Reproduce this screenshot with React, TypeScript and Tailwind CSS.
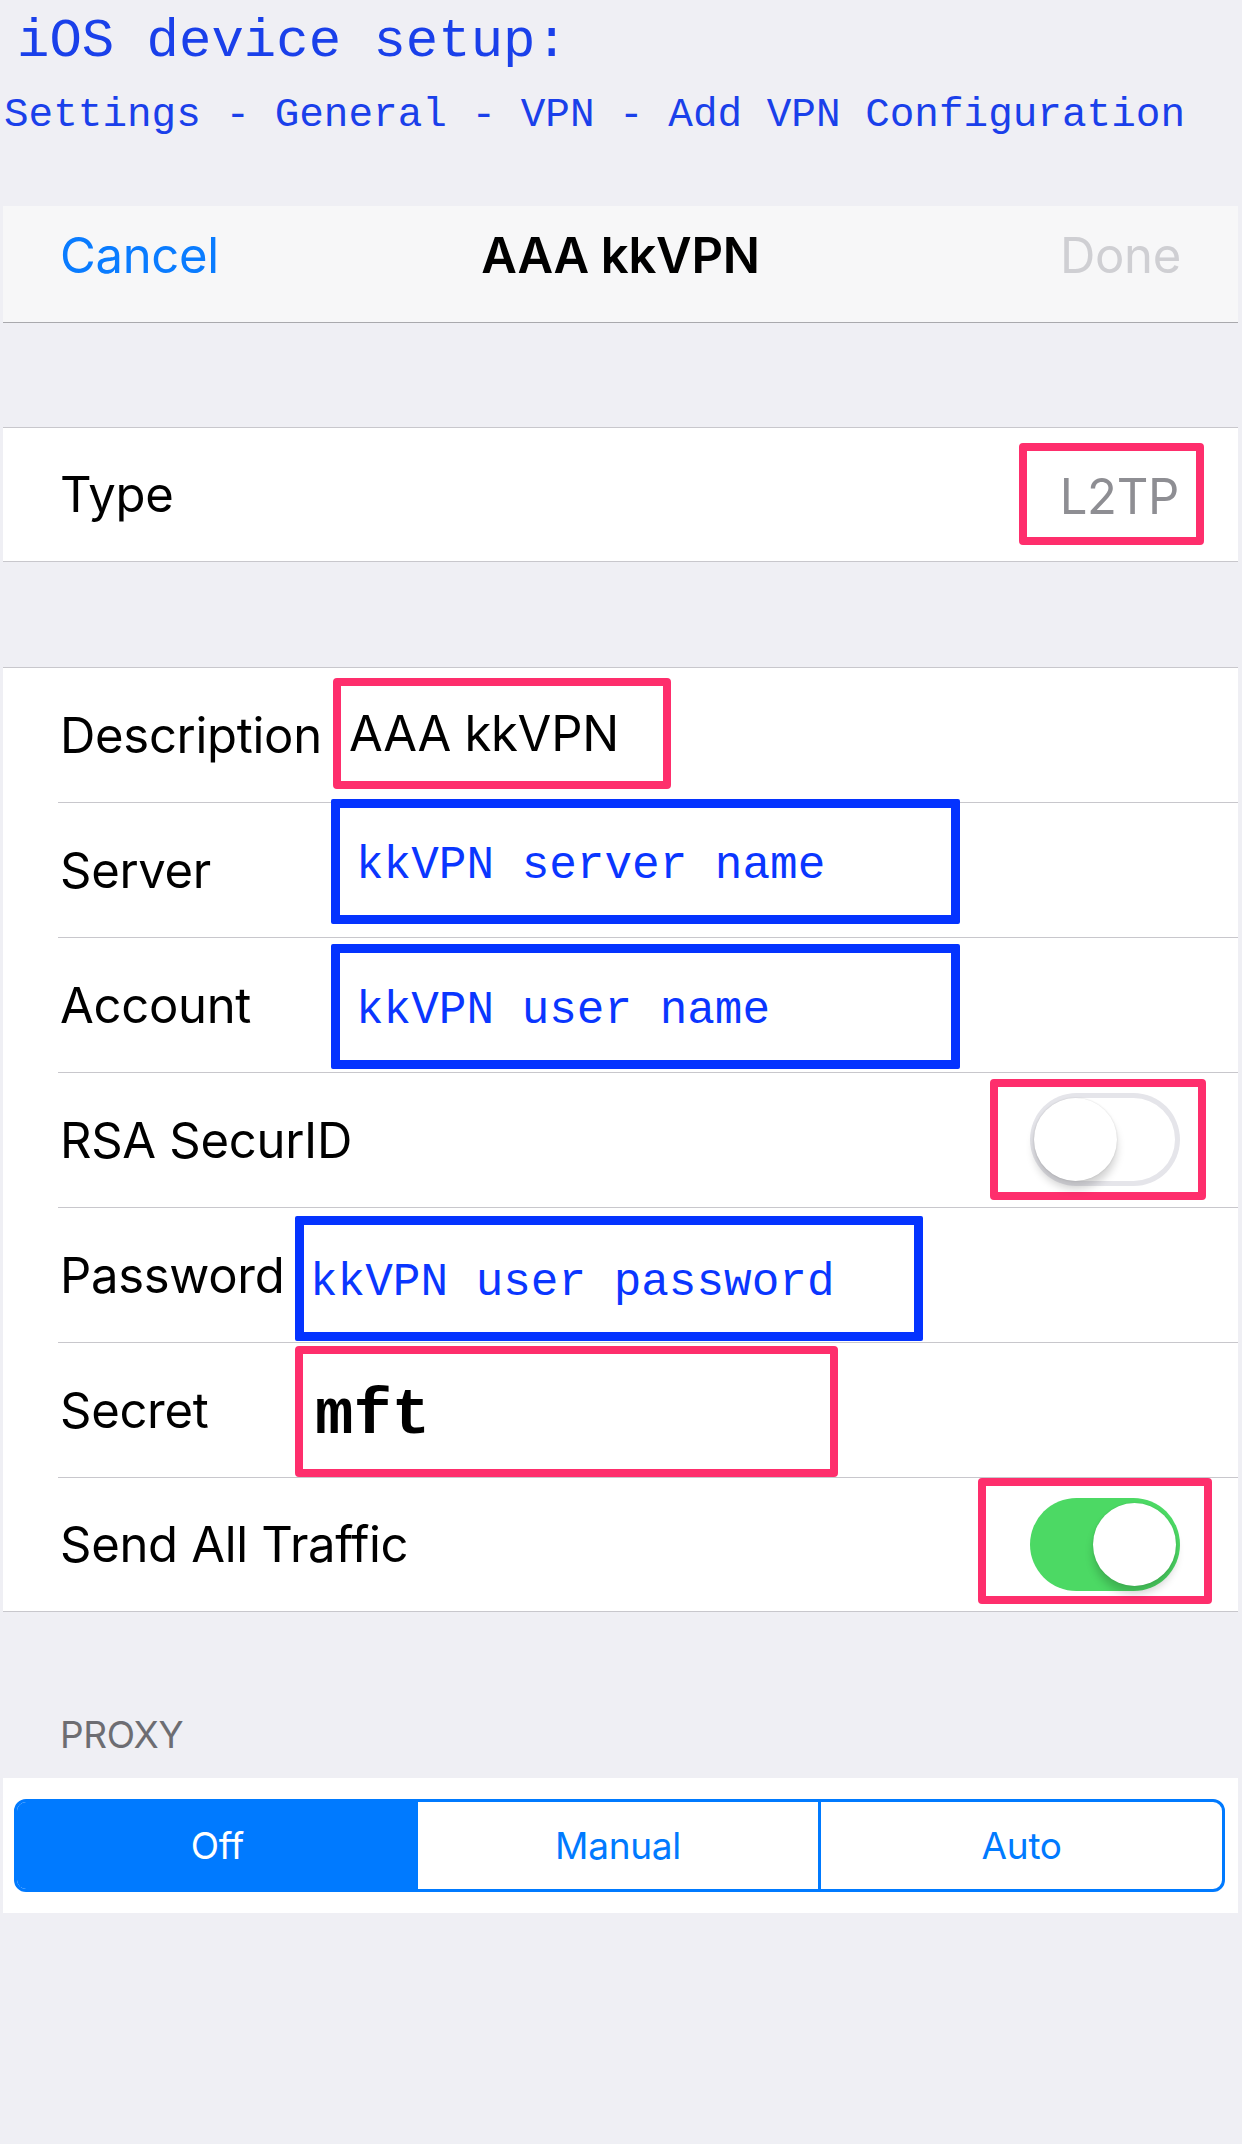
import React from "react";

// iOS "Add VPN Configuration" screen with annotation boxes drawn on top

const sans = "font-['Inter','Liberation_Sans',sans-serif] tracking-[-0.3px]";
const mono = "font-['Liberation_Mono','Courier_New',monospace] tracking-normal";

function Toggle({ on }: { on: boolean }) {
  return (
    <div
      className={
        on
          ? "relative w-[150px] h-[93px] rounded-full bg-[#4cd964]"
          : "relative w-[150px] h-[93px] rounded-full bg-white shadow-[inset_0_0_0_5px_#e5e5ea]"
      }
    >
      <div
        className={
          on
            ? "absolute left-[63px] top-[5px] w-[83px] h-[83px] rounded-full bg-white shadow-[0_8px_9px_rgba(0,0,0,0.18),0_0_2px_rgba(0,0,0,0.12)]"
            : "absolute left-[4px] top-[5px] w-[83px] h-[83px] rounded-full bg-white shadow-[0_8px_9px_rgba(0,0,0,0.18),0_0_2px_rgba(0,0,0,0.15)]"
        }
      />
    </div>
  );
}

function Row({
  children,
  last = false,
  h = "h-[134px]",
}: {
  children: React.ReactNode;
  last?: boolean;
  h?: string;
}) {
  return (
    <div>
      <div className={`flex items-start pl-[57px] ${h}`}>{children}</div>
      {!last && <div className="ml-[55px] h-px bg-[#c8c7cc]" />}
    </div>
  );
}

function Label({ text, w }: { text: string; w: string }) {
  return (
    <div className={`${w} self-center shrink-0 text-[49px] leading-none text-black ${sans}`}>
      {text}
    </div>
  );
}

function BlueBox({ text, w, mt, pl }: { text: string; w: string; mt: string; pl: string }) {
  return (
    <div
      className={`${w} ${mt} ${pl} h-[125px] shrink-0 flex items-center pt-[9px] border-[9px] border-[#0433ff] rounded-[2px] text-[46px] leading-none text-[#0a36ff] whitespace-pre ${mono}`}
    >
      {text}
    </div>
  );
}

export default function App() {
  return (
    <div className={`w-[1242px] min-h-[2144px] bg-[#efeff4] overflow-hidden ${sans}`}>
      {/* annotation header */}
      <div className="pt-[15px]">
        <div className={`pl-[17px] text-[54px] leading-none text-[#1a40ea] whitespace-pre ${mono}`}>
          iOS device setup:
        </div>
        <div className={`mt-[26px] pl-[4px] text-[41px] leading-none text-[#1a40ea] whitespace-pre ${mono}`}>
          Settings - General - VPN - Add VPN Configuration
        </div>
      </div>

      {/* nav bar */}
      <div className="mt-[70px] ml-[3px] w-[1235px] h-[117px] bg-[#f7f7f8] border-b border-[#a9a9ad] grid grid-cols-3 items-start pt-[25px] px-[57px] text-[49px] leading-none">
        <span className="justify-self-start text-[#0a7cff]">Cancel</span>
        <span className="justify-self-center font-semibold text-black whitespace-nowrap">AAA kkVPN</span>
        <span className="justify-self-end text-[#cfcfd3]">Done</span>
      </div>

      <div className="h-[104px]" />

      {/* type */}
      <div className="ml-[3px] w-[1235px] bg-white border-y border-[#c8c7cc]">
        <div className="flex items-start h-[133px] pl-[57px] pr-[34px]">
          <Label text="Type" w="w-auto" />
          <div className="ml-auto mt-[15px] w-[185px] h-[102px] flex items-center justify-end pr-[17px] pt-[5px] border-[8px] border-[#fe2e6c] rounded-[4px] text-[49px] leading-none text-[#8e8e93]">
            L2TP
          </div>
        </div>
      </div>

      <div className="h-[105px]" />

      {/* main group */}
      <div className="ml-[3px] w-[1235px] bg-white border-y border-[#c8c7cc]">
        <Row>
          <Label text="Description" w="w-[273px]" />
          <div className="mt-[10px] w-[338px] h-[111px] shrink-0 flex items-center pl-[8px] border-[8px] border-[#fe2e6c] rounded-[4px] text-[49px] leading-none text-black whitespace-nowrap">
            AAA kkVPN
          </div>
        </Row>
        <Row>
          <Label text="Server" w="w-[271px]" />
          <BlueBox text="kkVPN server name" w="w-[629px]" mt="-mt-[4px]" pl="pl-[16px]" />
        </Row>
        <Row>
          <Label text="Account" w="w-[271px]" />
          <BlueBox text="kkVPN user name" w="w-[629px]" mt="mt-[6px]" pl="pl-[16px]" />
        </Row>
        <Row>
          <Label text="RSA SecurID" w="w-auto" />
          <div className="ml-auto mr-[32px] mt-[6px] w-[216px] h-[121px] flex items-center pl-[32px] border-[8px] border-[#fe2e6c] rounded-[4px]">
            <Toggle on={false} />
          </div>
        </Row>
        <Row>
          <Label text="Password" w="w-[235px]" />
          <BlueBox text="kkVPN user password" w="w-[628px]" mt="mt-[8px]" pl="pl-[6px]" />
        </Row>
        <Row>
          <Label text="Secret" w="w-[235px]" />
          <div className={`mt-[3px] w-[543px] h-[131px] shrink-0 flex items-start pt-[30px] pl-[12px] border-[8px] border-[#fe2e6c] rounded-[4px] text-[64px] leading-none font-bold text-black ${mono}`}>
            mft
          </div>
        </Row>
        <Row last h="h-[133px]">
          <Label text="Send All Traffic" w="w-auto" />
          <div className="ml-auto mr-[26px] w-[234px] h-[126px] flex items-start pt-[12px] pl-[44px] border-[8px] border-[#fe2e6c] rounded-[4px]">
            <Toggle on />
          </div>
        </Row>
      </div>

      {/* proxy */}
      <div className="pt-[104px] pb-[25px] pl-[60px] text-[37px] leading-none text-[#6d6d72]">PROXY</div>
      <div className="ml-[3px] w-[1235px] bg-white pt-[21px] pb-[21px] pl-[11px]">
        <div className="w-[1211px] h-[93px] flex border-[3px] border-[#007aff] rounded-[12px] overflow-hidden text-[37px] leading-none">
          <div className="flex-1 flex items-center justify-center bg-[#007aff] text-white">Off</div>
          <div className="flex-1 flex items-center justify-center text-[#007aff]">Manual</div>
          <div className="flex-1 flex items-center justify-center border-l-[3px] border-[#007aff] text-[#007aff]">Auto</div>
        </div>
      </div>
    </div>
  );
}
